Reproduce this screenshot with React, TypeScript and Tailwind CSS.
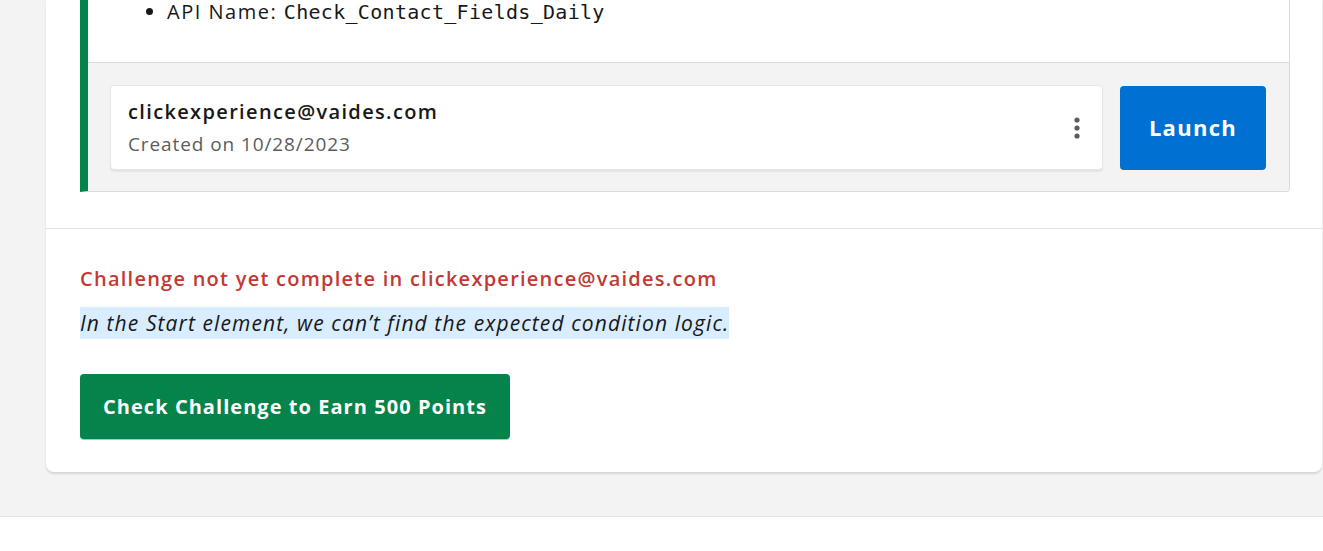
import React from 'react';

export default function App() {
  return (
    <div className="w-[1323px] h-[551px] overflow-hidden bg-white font-['Open_Sans',sans-serif] text-[#181818]">
      <div className="bg-[#f3f3f3] h-[517px] border-b border-[#e5e5e5] pl-[46px]">
        {/* Outer challenge card */}
        <div className="w-[1276px] bg-white rounded-b-lg shadow-[0_2px_2px_rgba(0,0,0,0.12)]">
          <div className="pl-[34px] pr-[32px] pb-[36px]">
            <div className="border-l-8 border-l-[#04844b] border-r border-b border-[#dddbda] rounded-br">
              <div className="h-[63px] border-b border-[#dddbda] pl-[58px] pt-[1px]">
                <ul className="list-disc pl-[21px] text-[20px] leading-[22px] tracking-[1.5px]">
                  <li>
                    API Name: <span className="font-['DejaVu_Sans_Mono',monospace] text-[20px] tracking-[0.3px]">Check_Contact_Fields_Daily</span>
                  </li>
                </ul>
              </div>
              <div className="bg-[#f3f3f3] flex items-center gap-[17px] pt-[22px] pb-[21px] pl-[22px] pr-[23px] rounded-br">
                <div className="flex-1 h-[85px] bg-white border border-[#e5e5e5] rounded shadow-[0_2px_1px_rgba(0,0,0,0.06)] flex items-center justify-between pl-[17px] pr-[22px]">
                  <div className="flex flex-col">
                    <span className="text-[20px] font-semibold leading-[26px] tracking-[1.35px]">clickexperience@vaides.com</span>
                    <span className="text-[19px] text-[#5c5c5c] leading-[24px] mt-[7px] tracking-[0.9px]">Created on 10/28/2023</span>
                  </div>
                  <svg width="6" height="22" viewBox="0 0 6 22" className="text-[#5c5c5c]">
                    <circle cx="3" cy="3" r="2.6" fill="currentColor" />
                    <circle cx="3" cy="11" r="2.6" fill="currentColor" />
                    <circle cx="3" cy="19" r="2.6" fill="currentColor" />
                  </svg>
                </div>
                <button className="w-[146px] h-[84px] bg-[#0070d2] rounded text-white text-[22px] font-bold tracking-[1.3px]">Launch</button>
              </div>
            </div>
          </div>

          <div className="border-t border-[#e5e5e5] pl-[34px] pt-[37px] pb-[33px]">
            <p className="text-[20px] font-semibold text-[#c23934] leading-[26px] tracking-[1.25px]">Challenge not yet complete in clickexperience@vaides.com</p>
            <p className="mt-[15px] inline-block bg-[#d8edff] text-[21px] italic leading-[32px] tracking-[1.1px]">In the Start element, we can’t find the expected condition logic.</p>
            <div className="mt-[35px]">
              <button className="h-[65px] px-[23px] bg-[#04844b] rounded text-white text-[20px] font-bold tracking-[1.05px] shadow-[0_1px_0_rgba(0,0,0,0.25)]">Check Challenge to Earn 500 Points</button>
            </div>
          </div>
        </div>
      </div>
    </div>
  );
}
